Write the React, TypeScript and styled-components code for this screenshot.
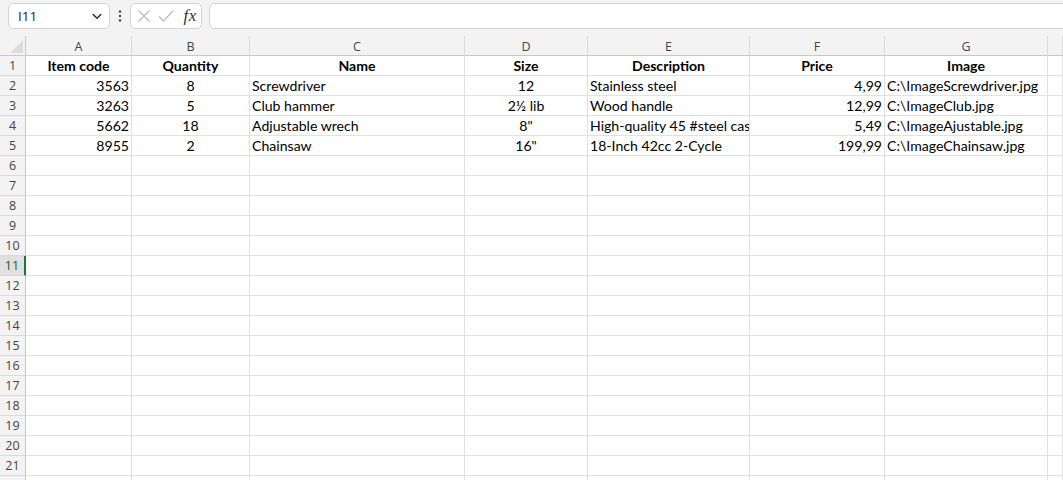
import React from "react";
import styled, { createGlobalStyle } from "styled-components";

const GlobalStyle = createGlobalStyle`
  html, body {
    margin: 0;
    padding: 0;
    background: #ffffff;
    overflow: hidden;
  }
  * { box-sizing: border-box; }
`;

const Page = styled.div`
  width: 1063px;
  height: 480px;
  overflow: hidden;
  background: #ffffff;
  display: flex;
  flex-direction: column;
`;

const Toolbar = styled.div`
  height: 36px;
  flex: none;
  background: #f3f3f3;
  display: flex;
  align-items: flex-start;
  padding: 3px 0 0 8px;
  overflow: hidden;
`;

const Box = styled.div`
  height: 26px;
  background: #ffffff;
  border: 1px solid #d4d4d4;
  border-radius: 5px;
  display: flex;
  align-items: center;
`;

const NameBox = styled(Box)`
  width: 102px;
  padding: 0 7px 0 9px;
  justify-content: space-between;
  font-family: "Open Sans", "Noto Sans", sans-serif;
  font-size: 13.5px;
  color: #242424;
`;

const Kebab = styled.div`
  width: 20px;
  height: 26px;
  display: flex;
  align-items: center;
  justify-content: center;
`;

const FxBox = styled(Box)`
  width: 72px;
  padding: 0 0 0 5px;
`;

const IconSlot = styled.div<{ $w: number }>`
  width: ${(p) => p.$w}px;
  height: 24px;
  display: flex;
  align-items: center;
  justify-content: center;
`;

const FxText = styled.span`
  font-family: "Liberation Serif", "DejaVu Serif", serif;
  font-style: italic;
  font-size: 17px;
  color: #333333;
  letter-spacing: 0.5px;
`;

const FormulaInput = styled(Box)`
  flex: 1;
  margin-left: 7px;
  margin-right: -12px;
`;

const Grid = styled.div`
  display: grid;
  grid-template-columns: 26px 106px 118px 215px 123px 162px 135px 163px 1fr;
  grid-auto-rows: 20px;
  flex: 1;
  overflow: hidden;
`;

const Corner = styled.div`
  position: relative;
  background: #f3f3f3;
  border-right: 1px solid #c8c8c8;
  border-bottom: 1px solid #c8c8c8;
  &::after {
    content: "";
    position: absolute;
    right: 2px;
    bottom: 2px;
    width: 0;
    height: 0;
    border-left: 13px solid transparent;
    border-bottom: 13px solid #dcdcdc;
  }
`;

const ColHead = styled.div`
  background: #f3f3f3;
  border-right: 1px solid #dadada;
  border-bottom: 1px solid #c8c8c8;
  font-family: "Open Sans", "Noto Sans", sans-serif;
  font-size: 12.5px;
  color: #444444;
  display: flex;
  align-items: center;
  justify-content: center;
  padding-top: 1px;
`;

const RowHead = styled.div<{ $active?: boolean }>`
  background: ${(p) => (p.$active ? "#e0e0e0" : "#f3f3f3")};
  border-right: ${(p) => (p.$active ? "2px solid #107c41" : "1px solid #c8c8c8")};
  border-bottom: 1px solid #dadada;
  font-family: "Open Sans", "Noto Sans", sans-serif;
  font-size: 12.5px;
  color: ${(p) => (p.$active ? "#185c37" : "#444444")};
  display: flex;
  align-items: center;
  justify-content: center;
`;

const Cell = styled.div<{ $align: string; $bold?: boolean }>`
  border-right: 1px solid #e1e1e1;
  border-bottom: 1px solid #e1e1e1;
  font-family: Lato, "Open Sans", sans-serif;
  font-size: 14.1px;
  font-weight: ${(p) => (p.$bold ? 700 : 400)};
  color: #000000;
  white-space: nowrap;
  overflow: hidden;
  text-align: ${(p) => p.$align};
  line-height: 19px;
  padding: 0 2px 0 2px;
`;

const cols = ["A", "B", "C", "D", "E", "F", "G", ""];
const aligns = ["right", "center", "left", "center", "left", "right", "left", "left"];

const data: string[][] = [
  ["Item code", "Quantity", "Name", "Size", "Description", "Price", "Image"],
  ["3563", "8", "Screwdriver", "12", "Stainless steel", "4,99", "C:\\ImageScrewdriver.jpg"],
  ["3263", "5", "Club hammer", "2½ lib", "Wood handle", "12,99", "C:\\ImageClub.jpg"],
  ["5662", "18", "Adjustable wrech", '8"', "High-quality 45 #steel cast", "5,49", "C:\\ImageAjustable.jpg"],
  ["8955", "2", "Chainsaw", '16"', "18-Inch 42cc 2-Cycle", "199,99", "C:\\ImageChainsaw.jpg"],
];

const ROWS = 22;

export default function App() {
  return (
    <>
      <GlobalStyle />
      <Page>
        <Toolbar>
          <NameBox>
            <span>I11</span>
            <svg width="10" height="7" viewBox="0 0 10 7">
              <path d="M1.2 1.5 L5 5.2 L8.8 1.5" fill="none" stroke="#333" strokeWidth="1.6" strokeLinecap="round" strokeLinejoin="round" />
            </svg>
          </NameBox>
          <Kebab>
            <svg width="4" height="14" viewBox="0 0 4 14">
              <circle cx="2" cy="2.5" r="1.2" fill="#444" />
              <circle cx="2" cy="7" r="1.2" fill="#444" />
              <circle cx="2" cy="11.5" r="1.2" fill="#444" />
            </svg>
          </Kebab>
          <FxBox>
            <IconSlot $w={16}>
              <svg width="14" height="14" viewBox="0 0 14 14">
                <path d="M1.5 1.5 L12.5 12.5 M12.5 1.5 L1.5 12.5" stroke="#b8b8b8" strokeWidth="1.1" fill="none" />
              </svg>
            </IconSlot>
            <IconSlot $w={28}>
              <svg width="16" height="14" viewBox="0 0 16 14">
                <path d="M1 7.5 L5.5 12 L15 2" stroke="#b8b8b8" strokeWidth="1.1" fill="none" />
              </svg>
            </IconSlot>
            <IconSlot $w={22}>
              <FxText>fx</FxText>
            </IconSlot>
          </FxBox>
          <FormulaInput />
        </Toolbar>
        <Grid>
          <Corner />
          {cols.map((c, i) => (
            <ColHead key={"h" + i}>{c}</ColHead>
          ))}
          {Array.from({ length: ROWS }, (_, r) => (
            <React.Fragment key={"r" + r}>
              <RowHead $active={r + 1 === 11}>{r + 1}</RowHead>
              {cols.map((_, c) => {
                const row = data[r];
                const text = row && c < row.length ? row[c] : "";
                return (
                  <Cell key={c} $align={r === 0 ? "center" : aligns[c]} $bold={r === 0}>
                    {text}
                  </Cell>
                );
              })}
            </React.Fragment>
          ))}
        </Grid>
      </Page>
    </>
  );
}
